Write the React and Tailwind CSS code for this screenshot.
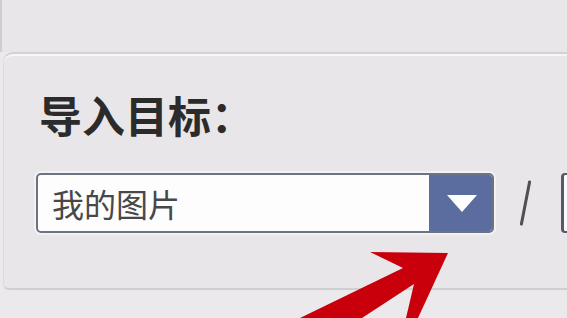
import React from "react";

export default function App() {
  return (
    <div
      className="relative w-[567px] h-[318px] overflow-hidden bg-[#ebe9ec]"
      style={{ fontFamily: '"Noto Sans CJK SC", "Noto Sans", sans-serif' }}
    >
      <div className="h-[52px] bg-[#e8e6e9] border-l-2 border-[#cfcdd1]" />
      <div className="ml-[3px] h-[238px] bg-[#e8e6e9] border-t-2 border-b-2 border-l border-t-[#d2d2d5] border-b-[#cfcfd2] border-l-[#dddbe0] rounded-tl-[10px] rounded-bl-[6px] shadow-[inset_0_2px_0_#f6f6f8]">
        <div className="mt-[36px] pl-[35px] h-[48px] leading-[48px] text-[43px] font-bold text-[#2b2b2b]">
          导入目标：
        </div>
        <div className="mt-[35px] pl-[32px] flex items-center">
          <div className="shrink-0 w-[458px] h-[60px] flex border-2 border-[#6d7383] rounded-[5px] bg-[#fdfdfe] overflow-hidden shadow-[0_0_0_2px_#f2f2f5]">
            <div className="flex-1 flex items-center pl-[14px] text-[32px] leading-none text-[#484848]">
              我的图片
            </div>
            <div className="w-[63px] h-full bg-[#5a6d9e] flex items-center justify-center">
              <div className="w-0 h-0 border-l-[15px] border-r-[15px] border-t-[17px] border-l-transparent border-r-transparent border-t-white ml-[2px]" />
            </div>
          </div>
          <div className="shrink-0 ml-[30px] w-[3px] h-[46px] bg-[#505050] rotate-[11deg] rounded-full" />
          <div className="shrink-0 ml-[34px] w-[12px] h-[60px] border-l-[3px] border-y-2 border-[#555a66] rounded-l-[4px] bg-[#fbfbfc]" />
        </div>
      </div>
      <svg
        className="absolute left-0 top-0 pointer-events-none"
        width="567"
        height="318"
        viewBox="0 0 567 318"
      >
        <polygon
          points="448,253 370,252 403,268 300,318 362,318 414,284 406,318 418,318"
          fill="#c9000b"
        />
      </svg>
    </div>
  );
}
